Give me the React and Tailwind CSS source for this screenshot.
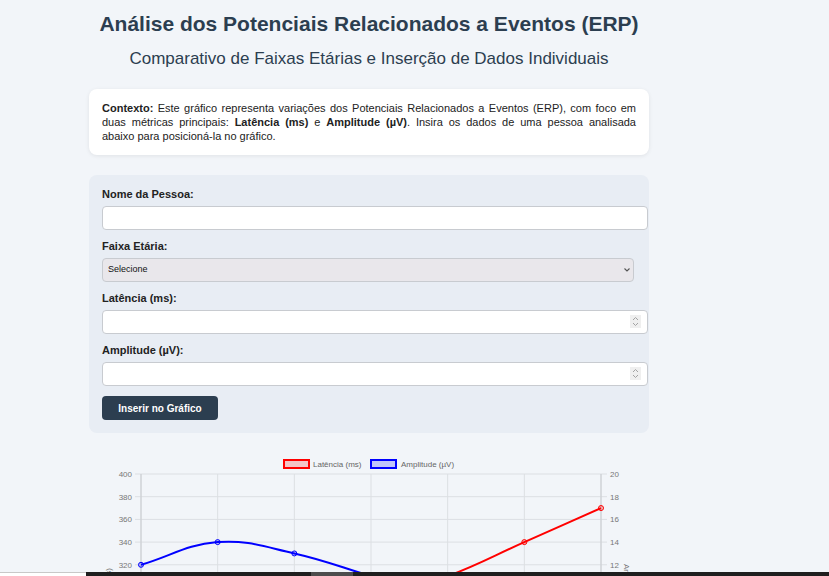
import React from "react";

const xs = [52, 128.67, 205.33, 282, 358.67, 435.33, 512];
const yL = (v) => 34 + ((400 - v) / 20) * 22.7;
const yR = (v) => 34 + ((20 - v) / 2) * 22.7;

const amplitude = [12, 14, 13, 11, 9, 8, 7];
const latency = [230, 250, 270, 290, 310, 340, 370];

// chart.js style spline (tension 0.4)
function splinePath(pts, t = 0.4) {
  let d = `M${pts[0][0]},${pts[0][1]}`;
  const cps = pts.map((p, i) => {
    const prev = pts[i - 1] || p;
    const next = pts[i + 1] || p;
    const d01 = Math.hypot(p[0] - prev[0], p[1] - prev[1]);
    const d12 = Math.hypot(next[0] - p[0], next[1] - p[1]);
    const s01 = d01 + d12 ? d01 / (d01 + d12) : 0;
    const s12 = d01 + d12 ? d12 / (d01 + d12) : 0;
    return {
      prev: [p[0] - t * s01 * (next[0] - prev[0]), p[1] - t * s01 * (next[1] - prev[1])],
      next: [p[0] + t * s12 * (next[0] - prev[0]), p[1] + t * s12 * (next[1] - prev[1])],
    };
  });
  for (let i = 1; i < pts.length; i++) {
    const a = cps[i - 1].next;
    const b = cps[i].prev;
    d += ` C${a[0]},${a[1]} ${b[0]},${b[1]} ${pts[i][0]},${pts[i][1]}`;
  }
  return d;
}

function Spinner() {
  return (
    <span className="pointer-events-none absolute right-[7px] top-[5px] flex h-[13px] w-[11px] flex-col items-center justify-center bg-[#efefef]">
      <svg width="7" height="11" viewBox="0 0 7 11" fill="none" stroke="#a3a3a3" strokeWidth="1">
        <path d="M1 4 L3.5 1.5 L6 4" />
        <path d="M1 7 L3.5 9.5 L6 7" />
      </svg>
    </span>
  );
}

function Chart() {
  const gridY = [];
  for (let v = 400; v >= 200; v -= 20) gridY.push(v);
  const bluePts = xs.map((x, i) => [x, yR(amplitude[i])]);
  const redPts = xs.map((x, i) => [x, yL(latency[i])]);

  return (
    <svg width="560" height="290" className="mt-[7px] block" style={{ fontFamily: "'Liberation Sans', Arial, sans-serif" }}>
      {/* legend */}
      <rect x="195" y="20" width="25" height="8" fill="rgba(255,0,0,0.2)" stroke="#ff0000" strokeWidth="2" />
      <text x="224" y="27" fontSize="8" fill="#666">Latência (ms)</text>
      <rect x="282" y="20" width="25" height="8" fill="rgba(0,0,255,0.2)" stroke="#0000ff" strokeWidth="2" />
      <text x="312" y="27" fontSize="8" fill="#666">Amplitude (µV)</text>

      {/* grid */}
      {gridY.map((v) => (
        <g key={v}>
          <line x1="46" x2="518" y1={yL(v)} y2={yL(v)} stroke="#dcdfe3" strokeWidth="1" />
          <text x="43" y={yL(v) + 3} fontSize="8" fill="#777" textAnchor="end">{v}</text>
          <text x="521" y={yL(v) + 3} fontSize="8" fill="#777">{(v - 200) / 10}</text>
        </g>
      ))}
      {xs.map((x) => (
        <line key={x} x1={x} x2={x} y1="34" y2="270" stroke="#dcdfe3" strokeWidth="1" />
      ))}
      <line x1="52" x2="52" y1="34" y2="270" stroke="#c9ccd0" />
      <line x1="512" x2="512" y1="34" y2="270" stroke="#c9ccd0" />

      {/* axis titles */}
      <text transform="translate(22,128) rotate(-90)" fontSize="8" fill="#777" textAnchor="end">Latência (ms)</text>
      <text transform="translate(535,124) rotate(90)" fontSize="8" fill="#777">Amplitude (µV)</text>

      {/* data */}
      <path d={splinePath(redPts)} fill="none" stroke="#ff0000" strokeWidth="2" />
      <path d={splinePath(bluePts)} fill="none" stroke="#0000ff" strokeWidth="2" />
      {redPts.map(([x, y]) => (
        <circle key={"r" + x} cx={x} cy={y} r="2.5" fill="rgba(255,0,0,0.2)" stroke="#ff0000" strokeWidth="1" />
      ))}
      {bluePts.map(([x, y]) => (
        <circle key={"b" + x} cx={x} cy={y} r="2.5" fill="rgba(0,0,255,0.2)" stroke="#0000ff" strokeWidth="1" />
      ))}
    </svg>
  );
}

export default function App() {
  const inputCls =
    "block h-[24px] w-[546px] rounded-[4px] border border-[#c8cbd0] bg-white px-2 text-[11px] text-[#333] outline-none [appearance:textfield] [&::-webkit-inner-spin-button]:appearance-none [&::-webkit-outer-spin-button]:appearance-none";
  const labelCls = "mb-[5px] block text-[11px] font-bold leading-[14px] text-[#222]";

  return (
    <div className="min-h-screen bg-[#f2f5f9] text-[#333]" style={{ fontFamily: "'Liberation Sans', Arial, sans-serif" }}>
      <div className="ml-[89px] w-[560px] pt-[11px]">
        {/* Header */}
        <h1 className="whitespace-nowrap text-center text-[21px] font-bold leading-[26px] text-[#2c3e50]">
          Análise dos Potenciais Relacionados a Eventos (ERP)
        </h1>
        <h2 className="mt-[12px] text-center text-[17px] leading-[20px] text-[#2c3e50]">
          Comparativo de Faixas Etárias e Inserção de Dados Individuais
        </h2>

        {/* Context */}
        <div className="mt-[20px] rounded-[8px] bg-white px-[13px] py-[12px] shadow-[0_1px_4px_rgba(0,0,0,0.08)]">
          <p className="text-[11px] leading-[14px] text-[#222]">
            <span className="block text-justify [text-align-last:justify]">
              <b>Contexto:</b> Este gráfico representa variações dos Potenciais Relacionados a Eventos (ERP), com foco em
            </span>
            <span className="block text-justify [text-align-last:justify]">
              duas métricas principais: <b>Latência (ms)</b> e <b>Amplitude (µV)</b>. Insira os dados de uma pessoa analisada
            </span>
            <span className="block">abaixo para posicioná-la no gráfico.</span>
          </p>
        </div>

        {/* Form */}
        <div className="mt-[20px] rounded-[8px] bg-[#e8edf4] px-[13px] pt-[12px] pb-[13px]">
          <label className={labelCls}>Nome da Pessoa:</label>
          <input type="text" className={inputCls + " mb-[9px]"} />

          <label className={labelCls}>Faixa Etária:</label>
          <div className="relative mb-[9px] h-[24px] w-[532px]">
            <select className="block h-[24px] w-full appearance-none rounded-[4px] border border-[#c8cbd0] bg-[#e9e7eb] px-[5px] text-[9px] text-[#111] outline-none">
              <option>Selecione</option>
            </select>
            <svg className="pointer-events-none absolute right-[4px] top-[10px]" width="6" height="4" viewBox="0 0 6 4" fill="none" stroke="#555" strokeWidth="1.1">
              <path d="M0.5 0.5 L3 3 L5.5 0.5" />
            </svg>
          </div>

          <label className={labelCls}>Latência (ms):</label>
          <div className="relative mb-[9px] w-[546px]">
            <input type="number" className={inputCls} />
            <Spinner />
          </div>

          <label className={labelCls}>Amplitude (µV):</label>
          <div className="relative mb-[10px] w-[546px]">
            <input type="number" className={inputCls} />
            <Spinner />
          </div>

          <button className="block h-[24px] w-[116px] rounded-[4px] bg-[#2c3e50] text-[10px] font-bold text-white">
            Inserir no Gráfico
          </button>
        </div>

        {/* Chart */}
        <Chart />
      </div>

      {/* bottom bar overlay */}
      <div className="fixed bottom-0 left-0 flex h-[4px] w-full">
        <div className="w-[86px] border-t border-[#c8c8c8] bg-white" />
        <div className="flex flex-1 bg-[#1f1f1f]">
          <div className="ml-[225px] w-[42px] bg-[#4d4d4d]" />
        </div>
      </div>
    </div>
  );
}
